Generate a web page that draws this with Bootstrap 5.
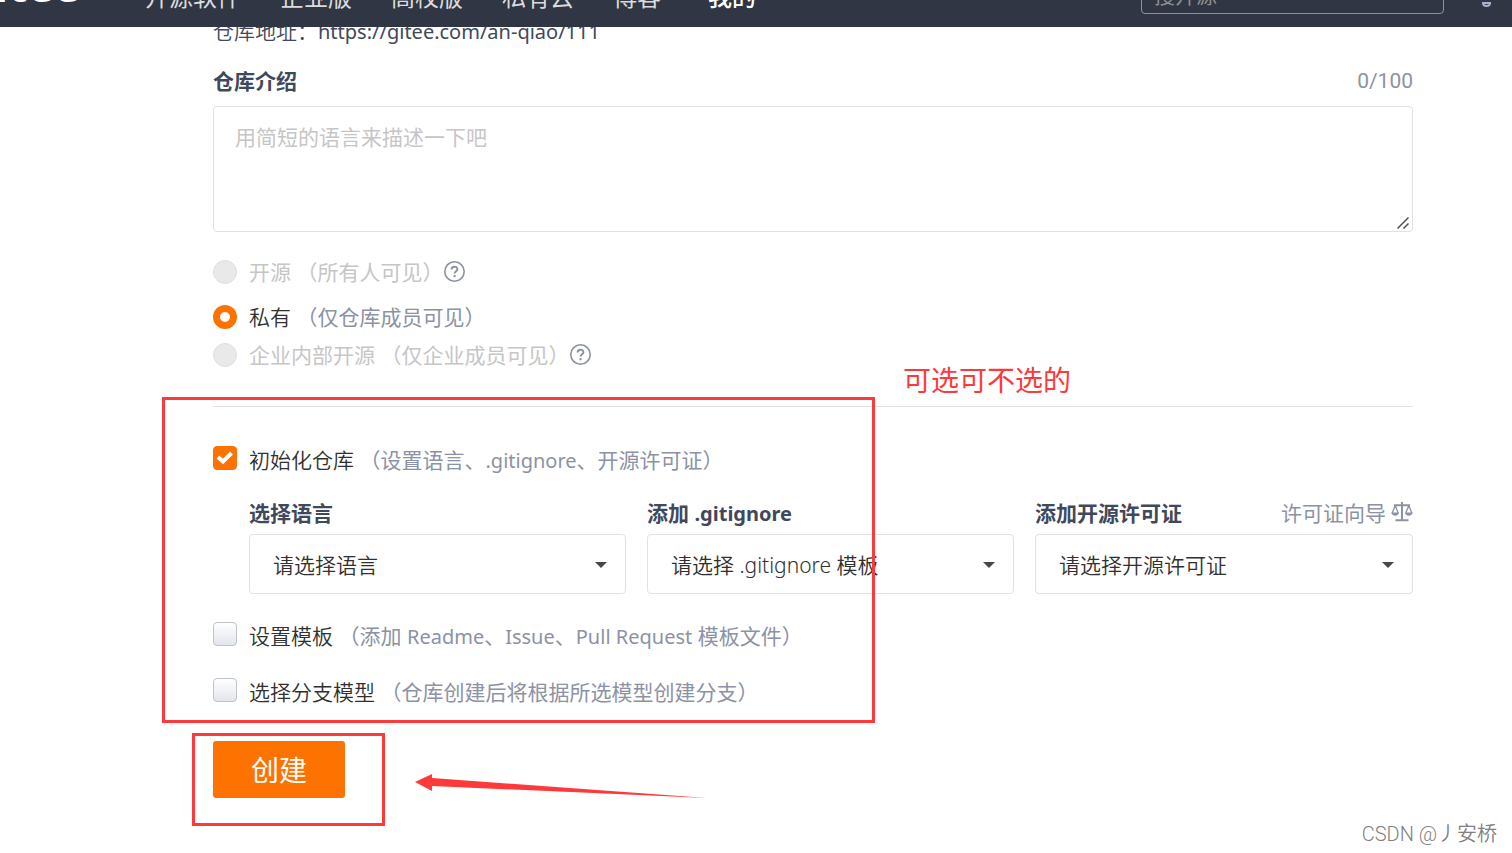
<!DOCTYPE html>
<html lang="zh-CN">
<head>
<meta charset="utf-8">
<meta name="viewport" content="width=device-width, initial-scale=1">
<title>新建仓库 - Gitee</title>
<link href="https://cdn.jsdelivr.net/npm/bootstrap@5.3.0/dist/css/bootstrap.min.css" rel="stylesheet">
<style>
  body { font-family: "Noto Sans", "Noto Sans CJK SC", sans-serif; font-size: 21px; font-weight: 350; line-height: 30px; color: #303030; background: #fff; }
  .latin { font-size: 20px; font-weight: 400; line-height: 1; }
  .field-title .latin { font-weight: 700; }
  .topbar { height: 27px; background: #303643; overflow: hidden; }
  .topbar-inner { height: 100%; }
  .brand-name { width: 145px; margin-left: -30px; font: 700 44px/42px "Open Sans", sans-serif; color: #fff; margin-bottom: 21px; }
  .topnav { gap: 39px; margin-bottom: 15px; margin-left: 30px; }
  .topnav a { font-size: 24px; font-weight: 400; line-height: 30px; color: #dcdcdc; padding: 0; }
  .topnav a.active { color: #fff; font-weight: 500; margin-left: 8px; }
  .search-box { width: 303px; height: 46px; margin-bottom: 13px; padding: 8px 12px 0; background: transparent; border: 1px solid #8c92a4; border-radius: 4px; font-size: 21px; color: #fff; }
  .search-box::placeholder { color: #8f8f8f; opacity: 1; }
  .bell { width: 68px; margin-bottom: 19px; }
  .page-main { padding: 16px 99px 0 213px; }
  .repo-url { color: #40485b; }
  .field-title { font-weight: 700; color: #40485b; }
  .count { font-family: Roboto, sans-serif; font-weight: 400; color: #8c92a4; }
  .intro { height: 126px; padding: 15px 21px; border: 1px solid #dfe1e8; border-radius: 4px; font-size: 21px; font-weight: 400; line-height: 30px;
    background: url("data:image/svg+xml,%3Csvg xmlns='http://www.w3.org/2000/svg' width='12' height='12'%3E%3Cpath d='M.5 11.500L11.500 .5M6.500 11.500L11.500 6.500' stroke='%23505050' stroke-width='1.500'/%3E%3C/svg%3E") right 3px bottom 2px no-repeat; }
  .intro::-webkit-resizer { background: transparent; }
  .intro::placeholder { color: #c6c6c6; opacity: 1; }
  .opt { gap: 12px; }
  .opt input { appearance: none; flex: none; width: 24px; height: 24px; margin: 0; }
  .opt input[type=radio] { border-radius: 50%; background: #e9e9e9; border: 1px solid #e0e0e0; }
  .opt input[type=radio]:checked { border: 7px solid #fe7300; background: #fff; }
  .opt input[type=checkbox] { border: 1px solid #bfc2c9; border-radius: 4px; background: linear-gradient(#fff, #e2e5ec); margin-bottom: 5px; }
  .opt input[type=checkbox]:checked { border-color: #fe7300; background: #fe7300 url("data:image/svg+xml,%3Csvg xmlns='http://www.w3.org/2000/svg' viewBox='0 0 22 22'%3E%3Cpath d='M4 10l5 4.500L17.500 6' fill='none' stroke='white' stroke-width='4'/%3E%3C/svg%3E") center / 22px; }
  .note { color: #8c92a4; }
  .note, .off, .guide { font-weight: 400; }
  .off, .off .note { color: #c6c6c6; }
  .help { display: block; margin-left: -11px; margin-bottom: 2px; }
  .rule { border-top: 1px solid #dfe1e8; }
  .picks { display: grid; grid-template-columns: 377fr 367fr 378fr; gap: 21px; padding-left: 36px; }
  .pick { width: 100%; height: 60px; margin-top: 6px; padding: 2px 40px 0 23px; appearance: none; border: 1px solid #dfe1e8; border-radius: 4px; color: #303030; font-size: 21px; font-weight: 350;
    background: #fff url("data:image/svg+xml,%3Csvg xmlns='http://www.w3.org/2000/svg' viewBox='0 0 12 6'%3E%3Cpath d='M0 0h12L6 6z' fill='%23484848'/%3E%3C/svg%3E") right 18px top 27px / 12px 6px no-repeat; }
  .guide { color: #8c92a4; text-decoration: none; gap: 5px; }
  .guide svg { margin-bottom: 2px; }
  .btn-create { width: 132px; height: 57px; border: 0; border-radius: 3px; background: #fe7300; color: #fff; font-size: 28px; line-height: 30px; }
  .btn-create:hover { background: #e96900; color: #fff; }
  .marker { position: absolute; border: 3px solid #fc3a3a; pointer-events: none; }
  .marker-options { left: -51px; top: -10px; width: 713px; height: 326px; }
  .marker-create { left: -21px; top: -8px; width: 193px; height: 93px; }
  .marker-text { position: absolute; left: 690px; top: -47px; font-size: 28px; font-weight: 400; line-height: 40px; color: #fc3a3a; }
  .marker-arrow { position: absolute; left: 202px; top: 32px; }
  .watermark { position: absolute; right: 15px; bottom: 4px; font-family: Roboto, "Noto Sans CJK SC", sans-serif; font-size: 20px; color: #808080; }
</style>
</head>
<body class="position-relative min-vh-100">
<header class="topbar fixed-top">
  <div class="topbar-inner d-flex align-items-end">
    <a class="brand-name text-decoration-none flex-shrink-0" href="#">gitee</a>
    <nav class="topnav nav flex-nowrap text-nowrap" aria-label="主导航">
      <a class="nav-link" href="#">开源软件</a>
      <a class="nav-link" href="#">企业版</a>
      <a class="nav-link" href="#">高校版</a>
      <a class="nav-link" href="#">私有云</a>
      <a class="nav-link" href="#">博客</a>
      <a class="nav-link active" href="#">我的</a>
    </nav>
    <input class="search-box ms-auto" type="search" placeholder="搜开源" aria-label="搜开源">
    <svg class="bell" height="20" viewBox="0 0 68 20" fill="none" stroke="#a9b1cc" stroke-width="2" aria-hidden="true"><path d="M36 11V6a6 6 0 0 1 12 0v5M39 15h7c0 4-7 4-7 0z"/></svg>
  </div>
</header>

<main class="page-main">
  <div class="repo-url">仓库地址：<span class="latin">https://gitee.com/an-qiao/111</span></div>
  <form>
    <div class="d-flex justify-content-between" style="margin-top:20px">
      <label class="field-title" for="intro">仓库介绍</label>
      <span class="count">0/100</span>
    </div>
    <textarea id="intro" class="intro d-block w-100" style="margin-top:10px" placeholder="用简短的语言来描述一下吧"></textarea>

    <div class="opt off d-flex align-items-center" style="margin-top:25px">
      <input type="radio" name="visibility" id="v-open" disabled>
      <label for="v-open">开源 <span class="note">（所有人可见）</span></label>
      <svg class="help" width="21" height="21" viewBox="0 0 21 21" fill="none" stroke="#8c92a4" stroke-width="1.600" role="img" aria-label="帮助"><circle cx="10.500" cy="10.500" r="9.700"/><path d="M7.600 8.400c0-3.600 5.800-3.600 5.800-.2 0 2-2.800 2-2.800 4.200M10.600 14v2.200" stroke-width="2"/></svg>
    </div>
    <div class="opt d-flex align-items-center" style="margin-top:15px">
      <input type="radio" name="visibility" id="v-private" checked>
      <label for="v-private">私有 <span class="note">（仅仓库成员可见）</span></label>
    </div>
    <div class="opt off d-flex align-items-center mt-2">
      <input type="radio" name="visibility" id="v-inner" disabled>
      <label for="v-inner">企业内部开源 <span class="note">（仅企业成员可见）</span></label>
      <svg class="help" width="21" height="21" viewBox="0 0 21 21" fill="none" stroke="#8c92a4" stroke-width="1.600" role="img" aria-label="帮助"><circle cx="10.500" cy="10.500" r="9.700"/><path d="M7.600 8.400c0-3.600 5.800-3.600 5.800-.2 0 2-2.800 2-2.800 4.200M10.600 14v2.200" stroke-width="2"/></svg>
    </div>

    <section class="rule position-relative" style="margin-top:36px;padding-top:38px">
      <div class="opt d-flex align-items-center">
        <input type="checkbox" id="c-init" checked>
        <label for="c-init">初始化仓库 <span class="note">（设置语言、<span class="latin">.gitignore</span>、开源许可证）</span></label>
      </div>
      <div class="picks" style="margin-top:23px">
        <div>
          <label class="field-title d-block" for="s-lang">选择语言</label>
          <select class="pick" id="s-lang"><option>请选择语言</option></select>
        </div>
        <div>
          <label class="field-title d-block" for="s-ignore">添加 <span class="latin">.gitignore</span></label>
          <select class="pick" id="s-ignore"><option>请选择 .gitignore 模板</option></select>
        </div>
        <div>
          <div class="d-flex justify-content-between">
            <label class="field-title" for="s-license">添加开源许可证</label>
            <a class="guide d-flex align-items-center" href="#">许可证向导
              <svg width="22" height="20" viewBox="0 0 22 20" fill="none" stroke="#8c92a4" stroke-width="1.600" aria-hidden="true"><path d="M11 0v18M4.500 18.200h13M3 3.200h16" stroke-width="2"/><path d="M4.200 3.500L1.200 11M4.200 3.500L7.200 11M17.800 3.500L14.800 11M17.800 3.500L20.800 11" stroke-width="1.300"/><path d="M.3 10.500h7.800c-.5 4.200-7.300 4.200-7.800 0zM13.900 10.500h7.800c-.5 4.200-7.300 4.200-7.800 0z" fill="#8c92a4" stroke="none"/></svg>
            </a>
          </div>
          <select class="pick" id="s-license"><option>请选择开源许可证</option></select>
        </div>
      </div>
      <div class="opt d-flex align-items-center" style="margin-top:27px">
        <input type="checkbox" id="c-template">
        <label for="c-template">设置模板 <span class="note">（添加 <span class="latin">Readme</span>、<span class="latin">Issue</span>、<span class="latin">Pull Request</span> 模板文件）</span></label>
      </div>
      <div class="opt d-flex align-items-center" style="margin-top:26px">
        <input type="checkbox" id="c-branch">
        <label for="c-branch">选择分支模型 <span class="note">（仓库创建后将根据所选模型创建分支）</span></label>
      </div>
      <div class="marker marker-options"></div>
      <div class="marker-text">可选可不选的</div>
    </section>

    <div class="position-relative" style="margin-top:34px">
      <button class="btn btn-create" type="button">创建</button>
      <div class="marker marker-create"></div>
      <svg class="marker-arrow" width="294" height="28" viewBox="0 0 294 28" aria-hidden="true"><path d="M0 9L17 1V5L292 25 17 13V18z" fill="#fc3a3a"/></svg>
    </div>
  </form>
</main>
<div class="watermark">CSDN @丿安桥</div>
<script src="https://cdn.jsdelivr.net/npm/bootstrap@5.3.0/dist/js/bootstrap.bundle.min.js"></script>
</body>
</html>
